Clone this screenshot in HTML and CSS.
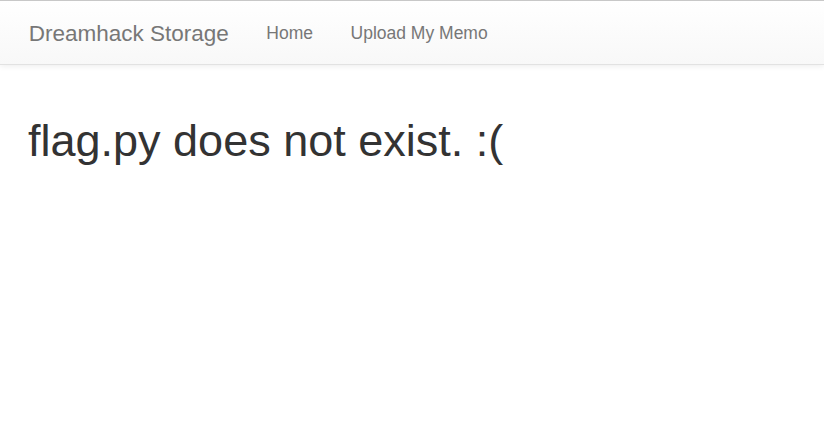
FILE: index.html
```html
<!DOCTYPE html>
<html lang="en">
<head>
<meta charset="utf-8">
<title>Dreamhack Storage</title>
<link rel="stylesheet" href="styles.css">
</head>
<body>
<nav class="navbar">
  <a class="brand" href="#">Dreamhack Storage</a>
  <ul class="nav">
    <li><a href="#">Home</a></li>
    <li><a href="#">Upload My Memo</a></li>
  </ul>
</nav>
<main class="container">
  <h1>flag.py does not exist. :(</h1>
</main>
</body>
</html>
```
FILE: styles.css
```css
html, body {
  margin: 0;
  padding: 0;
  background: #fff;
}
body {
  font-family: "Liberation Sans", Arial, sans-serif;
  color: #333;
}
a {
  text-decoration: none;
}
.navbar {
  display: flex;
  align-items: center;
  height: 61px;
  padding: 2px 0 0 10px;
  border-top: 1px solid #c8c8c8;
  border-bottom: 1px solid #e2e2e2;
  background: linear-gradient(to bottom, #ffffff 0%, #f8f8f8 100%);
  box-shadow: 0 1px 6px rgba(0, 0, 0, 0.08);
}
.brand {
  font-size: 22.5px;
  line-height: 28px;
  color: #777;
  padding: 0 18.75px;
}
.nav {
  display: flex;
  list-style: none;
  margin: 0;
  padding: 0;
}
.nav a {
  display: block;
  font-size: 17.5px;
  line-height: 25px;
  color: #777;
  padding: 0 18.75px;
}
.container {
  padding: 0 28px;
}
h1 {
  font-size: 45px;
  font-weight: 500;
  line-height: 49.5px;
  margin: 51px 0 0;
}
```
